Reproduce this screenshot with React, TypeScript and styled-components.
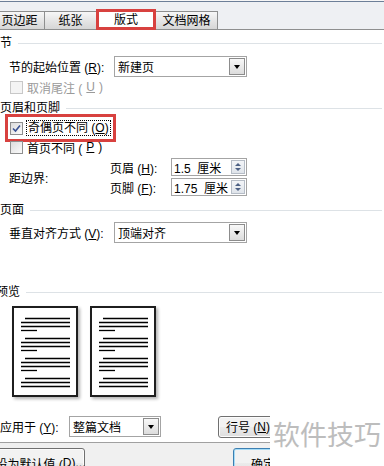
import React from "react";
import styled, { createGlobalStyle, css } from "styled-components";

const GlobalStyle = createGlobalStyle`
  html, body {
    margin: 0;
    padding: 0;
    background: #fff;
  }
  body {
    width: 384px;
    height: 466px;
    overflow: hidden;
    font-family: "Liberation Sans", "Noto Sans CJK SC", sans-serif;
    font-size: 12px;
    color: #000;
  }
`;

const Dialog = styled.div`
  position: relative;
  width: 384px;
  height: 466px;
  overflow: hidden;
  background: #f0f0f0;
  display: flex;
  flex-direction: column;

  & > * {
    flex-shrink: 0;
  }
`;

const TitleEdge = styled.div`
  height: 10px;
  background: linear-gradient(#f6f6f6 0 1px, #6d7f98 1px 2px, #eef0f3 2px);
`;

const TabRow = styled.div`
  display: flex;
  align-items: flex-end;
  height: 20px;
  box-sizing: border-box;
  border-bottom: 1px solid #8e8f8f;
  background: #eef0f3;
`;

const Tab = styled.div<{ $w: number; $active?: boolean; $first?: boolean }>`
  width: ${(p) => p.$w}px;
  height: 18px;
  box-sizing: border-box;
  margin-right: -1px;
  margin-left: ${(p) => (p.$first ? -6 : 0)}px;
  border: 1px solid #8e8f8f;
  border-bottom: none;
  background: linear-gradient(#f7f7f7, #e4e4e4 55%, #d6d6d6);
  display: flex;
  align-items: center;
  justify-content: center;
  line-height: 16px;
  ${(p) =>
    p.$active &&
    css`
      position: relative;
      z-index: 1;
      height: 21px;
      margin-bottom: -1px;
      background: #fff;
      outline: 3px solid #d8413f;
      outline-offset: -3px;
    `}
`;

const Panel = styled.div`
  height: 413px;
  box-sizing: border-box;
  background: #fff;
  border-bottom: 1px solid #a0a0a0;
  padding: 6px 2px 0 0;
  display: flex;
  flex-direction: column;

  & > * {
    flex-shrink: 0;
  }
`;

const GroupHeader = styled.div<{ $mt?: number; $shift?: number }>`
  display: flex;
  align-items: center;
  height: 14px;
  line-height: 14px;
  margin-top: ${(p) => p.$mt ?? 0}px;
  margin-left: ${(p) => p.$shift ?? 0}px;
  white-space: nowrap;

  &::after {
    content: "";
    flex: 1;
    height: 1px;
    margin-left: 6px;
    background: #dde2e6;
  }
`;

const FieldRow = styled.div<{ $mt: number }>`
  display: flex;
  align-items: center;
  height: 21px;
  margin-top: ${(p) => p.$mt}px;
  padding-left: 9px;
`;

const FieldLabel = styled.span<{ $w: number }>`
  width: ${(p) => p.$w}px;
  white-space: nowrap;
`;

const Select = styled.div<{ $w: number }>`
  width: ${(p) => p.$w}px;
  height: 21px;
  box-sizing: border-box;
  border: 1px solid #a4a4a4;
  background: #fff;
  display: flex;
  align-items: center;
  justify-content: space-between;
  padding: 0 1px 0 3px;
  white-space: nowrap;
`;

const DropButton = styled.span`
  width: 16px;
  height: 17px;
  box-sizing: border-box;
  border: 1px solid #8c8c8c;
  background: linear-gradient(#f8f8f8, #dcdcdc);
  display: flex;
  align-items: center;
  justify-content: center;

  &::before {
    content: "";
    border-left: 3.5px solid transparent;
    border-right: 3.5px solid transparent;
    border-top: 4px solid #000;
  }
`;

const CheckRow = styled.div<{ $mt: number; $h?: number; $marked?: boolean; $disabled?: boolean }>`
  display: flex;
  align-items: center;
  gap: 4px;
  align-self: flex-start;
  height: ${(p) => p.$h ?? 14}px;
  margin-top: ${(p) => p.$mt}px;
  margin-left: 10px;
  padding-right: 1px;
  color: ${(p) => (p.$disabled ? "#9a9a9a" : "#000")};
  white-space: nowrap;
  ${(p) =>
    p.$marked &&
    css`
      outline: 3px solid #d8413f;
      outline-offset: 2px;
    `}
`;

const Box = styled.span<{ $disabled?: boolean }>`
  width: 13px;
  height: 13px;
  box-sizing: border-box;
  border: 1px solid ${(p) => (p.$disabled ? "#c8c8c8" : "#8e8f8f")};
  background: ${(p) => (p.$disabled ? "#f4f4f4" : "linear-gradient(135deg, #dcdcdc, #fbfbfb)")};
  display: flex;
  align-items: center;
  justify-content: center;
`;

const FocusText = styled.span`
  outline: 1px dotted #000;
  padding: 0 1px;
  line-height: 14px;
`;

const MarginGroup = styled.div`
  display: flex;
  align-items: center;
  margin-top: 4px;
  padding-left: 9px;
`;

const SpinGrid = styled.div`
  display: grid;
  grid-template-columns: 61px 76px;
  row-gap: 2px;
  align-items: center;
`;

const SpinBox = styled.div`
  height: 18px;
  box-sizing: border-box;
  border: 1px solid #a4a4a4;
  display: flex;
  align-items: center;
  justify-content: space-between;
  padding: 0 1px 0 2px;
  white-space: pre;
`;

const SpinButton = styled.span`
  width: 14px;
  height: 14px;
  box-sizing: border-box;
  border: 1px solid #b5bcc6;
  background: linear-gradient(#f3f5f8, #dfe4ea);
  display: flex;
  flex-direction: column;
  align-items: center;
  justify-content: space-around;
  padding: 1px 0;

  &::before,
  &::after {
    content: "";
    border-left: 3px solid transparent;
    border-right: 3px solid transparent;
  }
  &::before {
    border-bottom: 3px solid #4d6185;
  }
  &::after {
    border-top: 3px solid #4d6185;
  }
`;

const PreviewRow = styled.div`
  display: flex;
  gap: 12px;
  margin: 7px 0 0 12px;
`;

const PageSheet = styled.div`
  width: 66px;
  height: 91px;
  box-sizing: border-box;
  border: 2px solid #1e1e1e;
  background: #fff;
  box-shadow: 2px 2px 3px rgba(0, 0, 0, 0.3);
`;

const ApplyRow = styled.div`
  display: flex;
  align-items: center;
  height: 21px;
  margin-top: 19px;
`;

const Button = styled.div<{ $w: number; $h?: number; $ml?: number; $default?: boolean }>`
  width: ${(p) => p.$w}px;
  height: ${(p) => p.$h ?? 22}px;
  box-sizing: border-box;
  margin-left: ${(p) => p.$ml ?? 0}px;
  border: 1px solid ${(p) => (p.$default ? "#3c7fb1" : "#707070")};
  border-radius: 3px;
  background: linear-gradient(#f2f2f2 0 50%, #ebebeb 50%, #dddddd);
  box-shadow: ${(p) => (p.$default ? "inset 0 0 0 1px #a6dcf7" : "inset 0 0 0 1px #fcfcfc")};
  display: flex;
  align-items: center;
  justify-content: center;
  white-space: nowrap;
`;

const ButtonBar = styled.div`
  display: flex;
  margin-top: 5px;
`;

const Watermark = styled.div`
  position: absolute;
  left: 270px;
  top: 412px;
  width: 114px;
  height: 54px;
  box-sizing: border-box;
  padding-left: 3px;
  background: #fff;
  color: #bdbdbd;
  font-family: "Noto Sans CJK SC", sans-serif;
  font-size: 27px;
  line-height: 44px;
  white-space: nowrap;
`;

const Key = ({ k }: { k: string }) => (
  <>
    (<u>{k}</u>)
  </>
);

const CheckMark = () => (
  <svg width="9" height="9" viewBox="0 0 9 9">
    <path d="M1 4.5 L3.5 7 L8 1.5" fill="none" stroke="#3a5294" strokeWidth="1.6" />
  </svg>
);

const paragraphs = [0, 20, 40, 60];

const PageLines = () => (
  <svg width="62" height="87" viewBox="0 0 62 87">
    {paragraphs.map((top, i) => (
      <g key={top} stroke="#000" strokeWidth="1.3">
        <line x1="11" x2="56" y1={top + 10.5} y2={top + 10.5} />
        <line x1="7" x2="56" y1={top + 14.5} y2={top + 14.5} />
        <line x1="7" x2="56" y1={top + 18.5} y2={top + 18.5} />
        {i < 3 && <line x1="7" x2="23" y1={top + 22.5} y2={top + 22.5} />}
      </g>
    ))}
  </svg>
);

const App = () => {
  return (
    <>
      <GlobalStyle />
      <Dialog>
        <TitleEdge />
        <TabRow>
          <Tab $w={51} $first>页边距</Tab>
          <Tab $w={53}>纸张</Tab>
          <Tab $w={60} $active>版式</Tab>
          <Tab $w={63}>文档网格</Tab>
        </TabRow>

        <Panel>
          <GroupHeader>节</GroupHeader>
          <FieldRow $mt={6}>
            <FieldLabel $w={105}>
              节的起始位置 <Key k="R" />:
            </FieldLabel>
            <Select $w={133}>
              新建页
              <DropButton />
            </Select>
          </FieldRow>
          <CheckRow $mt={3} $disabled>
            <Box $disabled />
            取消尾注 <Key k="U" />
          </CheckRow>

          <GroupHeader $mt={7}>页眉和页脚</GroupHeader>
          <CheckRow $mt={4} $h={18} $marked>
            <Box>
              <CheckMark />
            </Box>
            <FocusText>
              奇偶页不同 <Key k="O" />
            </FocusText>
          </CheckRow>
          <CheckRow $mt={3}>
            <Box />
            首页不同 <Key k="P" />
          </CheckRow>
          <MarginGroup>
            <FieldLabel $w={101}>距边界:</FieldLabel>
            <SpinGrid>
              <span>
                页眉 <Key k="H" />:
              </span>
              <SpinBox>
                {"1.5  厘米"}
                <SpinButton />
              </SpinBox>
              <span>
                页脚 <Key k="F" />:
              </span>
              <SpinBox>
                {"1.75  厘米"}
                <SpinButton />
              </SpinBox>
            </SpinGrid>
          </MarginGroup>

          <GroupHeader $mt={7}>页面</GroupHeader>
          <FieldRow $mt={5}>
            <FieldLabel $w={105}>
              垂直对齐方式 <Key k="V" />:
            </FieldLabel>
            <Select $w={133}>
              顶端对齐
              <DropButton />
            </Select>
          </FieldRow>

          <GroupHeader $mt={42} $shift={-4}>预览</GroupHeader>
          <PreviewRow>
            <PageSheet>
              <PageLines />
            </PageSheet>
            <PageSheet>
              <PageLines />
            </PageSheet>
          </PreviewRow>

          <ApplyRow>
            <FieldLabel $w={69}>
              应用于 <Key k="Y" />:
            </FieldLabel>
            <Select $w={92}>
              整篇文档
              <DropButton />
            </Select>
            <Button $w={60} $ml={57}>
              行号 <Key k="N" />
            </Button>
          </ApplyRow>
        </Panel>

        <ButtonBar>
          <Button $w={89} $h={30} $ml={-4}>
            设为默认值 <Key k="D" />...
          </Button>
          <Button $w={60} $h={30} $ml={148} $default>
            确定
          </Button>
        </ButtonBar>

        <Watermark>软件技巧</Watermark>
      </Dialog>
    </>
  );
};

export default App;
